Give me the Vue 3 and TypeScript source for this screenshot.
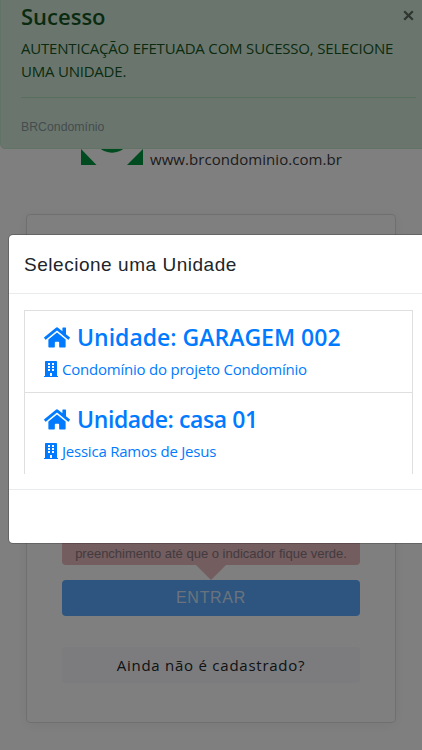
<script setup lang="ts">
interface Unit {
  name: string
  owner: string
}

const units: Unit[] = [
  { name: 'GARAGEM 002', owner: 'Condomínio do projeto Condomínio' },
  { name: 'casa 01', owner: 'Jessica Ramos de Jesus' },
]
</script>

<template>
  <div class="screen">
    <main class="page">
      <header class="brand">
        <svg class="brand-mark" width="62" height="62" viewBox="0 0 62 62">
          <path d="M0 0h15L0 15zM62 0H47l15 15zM0 62h15.5L0 46zM62 62H46L62 46z" fill="#009640" />
          <circle cx="31" cy="31" r="18.7" fill="#009640" />
        </svg>
        <span class="brand-url">www.brcondominio.com.br</span>
      </header>
      <section class="card">
        <div class="hint"><span>preenchimento até que o indicador fique verde.</span></div>
        <button class="btn enter"><span>ENTRAR</span></button>
        <button class="btn register"><span>Ainda não é cadastrado?</span></button>
      </section>
    </main>

    <aside class="toast">
      <svg class="close" width="11" height="11" viewBox="0 0 11 11">
        <path d="M1.2 1.2l8.6 8.6M9.8 1.2L1.2 9.8" stroke="#5f6c64" stroke-width="2.3" />
      </svg>
      <h4>Sucesso</h4>
      <p><span class="line one">AUTENTICAÇÃO EFETUADA COM SUCESSO, SELECIONE</span><br /><span class="line two">UMA UNIDADE.</span></p>
      <hr />
      <small>BRCondomínio</small>
    </aside>

    <div class="backdrop"></div>

    <div class="modal">
      <div class="modal-header"><h5>Selecione uma Unidade</h5></div>
      <div class="modal-body">
        <ul class="units">
          <li v-for="(unit, i) in units" :key="unit.name">
            <div class="unit-name">
              <svg class="home" width="26" height="23" viewBox="0 0 576 512">
                <path fill="currentColor" d="M280.37 148.26L96 300.11V464a16 16 0 0 0 16 16l112.06-.29a16 16 0 0 0 15.92-16V368a16 16 0 0 1 16-16h64a16 16 0 0 1 16 16v95.64a16 16 0 0 0 16 16.05L464 480a16 16 0 0 0 16-16V300L295.67 148.26a12.19 12.19 0 0 0-15.3 0zM571.6 251.47L488 182.56V44.05a12 12 0 0 0-12-12h-56a12 12 0 0 0-12 12v72.61L318.47 43a48 48 0 0 0-61 0L4.34 251.47a12 12 0 0 0-1.6 16.9l25.5 31A12 12 0 0 0 45.15 301l235.22-193.74a12.19 12.19 0 0 1 15.3 0L530.9 301a12 12 0 0 0 16.9-1.6l25.5-31a12 12 0 0 0-1.7-16.93z" />
              </svg>
              <span :class="'name-' + i">Unidade: {{ unit.name }}</span>
            </div>
            <div class="unit-owner">
              <svg width="14" height="16" viewBox="0 0 448 512">
                <path fill="currentColor" d="M436 480h-20V24c0-13.255-10.745-24-24-24H56C42.745 0 32 10.745 32 24v456H12c-6.627 0-12 5.373-12 12v20h448v-20c0-6.627-5.373-12-12-12zM128 76c0-6.627 5.373-12 12-12h40c6.627 0 12 5.373 12 12v40c0 6.627-5.373 12-12 12h-40c-6.627 0-12-5.373-12-12V76zm0 96c0-6.627 5.373-12 12-12h40c6.627 0 12 5.373 12 12v40c0 6.627-5.373 12-12 12h-40c-6.627 0-12-5.373-12-12v-40zm52 148h-40c-6.627 0-12-5.373-12-12v-40c0-6.627 5.373-12 12-12h40c6.627 0 12 5.373 12 12v40c0 6.627-5.373 12-12 12zm76 160h-64v-84c0-6.627 5.373-12 12-12h40c6.627 0 12 5.373 12 12v84zm64-172c0 6.627-5.373 12-12 12h-40c-6.627 0-12-5.373-12-12v-40c0-6.627 5.373-12 12-12h40c6.627 0 12 5.373 12 12v40zm0-96c0 6.627-5.373 12-12 12h-40c-6.627 0-12-5.373-12-12v-40c0-6.627 5.373-12 12-12h40c6.627 0 12 5.373 12 12v40zm0-96c0 6.627-5.373 12-12 12h-40c-6.627 0-12-5.373-12-12V76c0-6.627 5.373-12 12-12h40c6.627 0 12 5.373 12 12v40z" />
              </svg>
              <span>{{ unit.owner }}</span>
            </div>
          </li>
        </ul>
      </div>
      <div class="modal-footer"></div>
    </div>
  </div>
</template>

<style>
body {
  margin: 0;
  overflow: hidden;
}
</style>

<style scoped>
* {
  box-sizing: border-box;
}
.screen {
  position: relative;
  width: 100%;
  height: 750px;
  overflow: hidden;
  background: #fff;
  font-family: "Open Sans", "Noto Sans", sans-serif;
  font-size: 16px;
  line-height: 24px;
  color: #212529;
  white-space: nowrap;
}
.page {
  display: flex;
  flex-direction: column;
  height: 750px;
  padding: 103px 26px 27px;
}
.brand {
  display: flex;
  align-items: flex-end;
  height: 62px;
  padding-left: 55px;
  gap: 7px;
  margin-bottom: 49px;
}
.brand-mark {
  display: block;
}
.brand-url {
  font-size: 15px;
  line-height: 20px;
  margin-bottom: -4px;
  letter-spacing: 0.05px;
  color: #3a3a3c;
}
.card {
  flex: 1;
  display: flex;
  flex-direction: column;
  justify-content: flex-end;
  border: 1px solid #dfdfdf;
  border-radius: 4px;
  padding: 0 35px 39px;
  box-shadow: 0 2px 14px rgba(0, 0, 0, 0.06);
}
.hint {
  position: relative;
  display: flex;
  align-items: flex-end;
  justify-content: center;
  height: 60px;
  margin-bottom: 15px;
  padding-bottom: 1px;
  border-radius: 4px;
  background: #e6babf;
  color: #85777e;
  font-family: "Liberation Sans", sans-serif;
  font-size: 13px;
  line-height: 20px;
}
.hint::after {
  content: "";
  position: absolute;
  left: 134px;
  top: 60px;
  border: 15px solid transparent;
  border-top-color: #e6babf;
  border-bottom: 0;
}
.btn {
  display: block;
  width: 100%;
  height: 36px;
  padding: 0;
  border: 0;
  border-radius: 4px;
  font-size: 15px;
}
.enter {
  background: #5aaaff;
  color: #d5e7fa;
  font-family: "Liberation Sans", sans-serif;
  font-size: 16px;
  letter-spacing: 0.7px;
}
.register {
  margin-top: 31px;
  background: #f8f8fc;
  color: #212529;
  font-family: "Open Sans", sans-serif;
  letter-spacing: 0.75px;
}
.toast {
  position: absolute;
  left: 0;
  top: -8px;
  width: 440px;
  height: 157px;
  padding: 9px 24px 0 20px;
  border: 1px solid #c3e6cb;
  border-radius: 5px;
  background: #d4edda;
  color: #155724;
}
.toast h4 {
  margin: 0;
  font-size: 22px;
  font-weight: 600;
  line-height: 28px;
}
.toast p {
  margin: 7px 0 0;
  font-size: 15px;
  line-height: 23px;
}
.line.one {
  letter-spacing: -0.19px;
}
.line.two {
  letter-spacing: -0.22px;
}
.toast hr {
  width: 395px;
  margin: 14px 0 19px;
  border: 0;
  border-top: 1px solid #b1dfbb;
}
.toast small {
  display: block;
  font-family: "Liberation Sans", sans-serif;
  font-size: 12.3px;
  line-height: 20px;
  color: #8a99a0;
}
.close {
  position: absolute;
  left: 402px;
  top: 17px;
}
.backdrop {
  position: absolute;
  inset: 0;
  background: rgba(0, 0, 0, 0.5);
}
.modal {
  position: absolute;
  left: 8px;
  top: 234px;
  width: 420px;
  height: 310px;
  border: 1px solid rgba(0, 0, 0, 0.2);
  border-radius: 5px;
  background: #fff;
  background-clip: padding-box;
}
.modal-header {
  height: 59px;
  padding: 15px;
  border-bottom: 1px solid #e9ecef;
}
.modal h5 {
  margin: 0;
  font-family: "Liberation Sans", sans-serif;
  font-size: 19px;
  font-weight: 400;
  line-height: 29px;
  letter-spacing: 0.53px;
}
.modal-body {
  height: 196px;
  padding: 16px 0 0 15px;
  border-bottom: 1px solid #e9ecef;
}
.units {
  width: 389px;
  height: 164px;
  margin: 0;
  padding: 0;
  overflow: hidden;
  list-style: none;
  border: 1px solid #dfdfdf;
  border-bottom: 0;
  color: #007bff;
}
.units li {
  height: 82px;
  padding: 11px 20px 0 19px;
  border-bottom: 1px solid #dfdfdf;
}
.units li:last-child {
  border-bottom: 0;
}
.unit-name {
  display: flex;
  align-items: center;
  gap: 7px;
  height: 30px;
  font-size: 23px;
  font-weight: 600;
}
.name-1 {
  letter-spacing: -0.4px;
}
.unit-owner {
  display: flex;
  align-items: center;
  gap: 4px;
  height: 24px;
  margin-top: 5px;
  font-size: 15px;
  letter-spacing: -0.22px;
}
</style>
